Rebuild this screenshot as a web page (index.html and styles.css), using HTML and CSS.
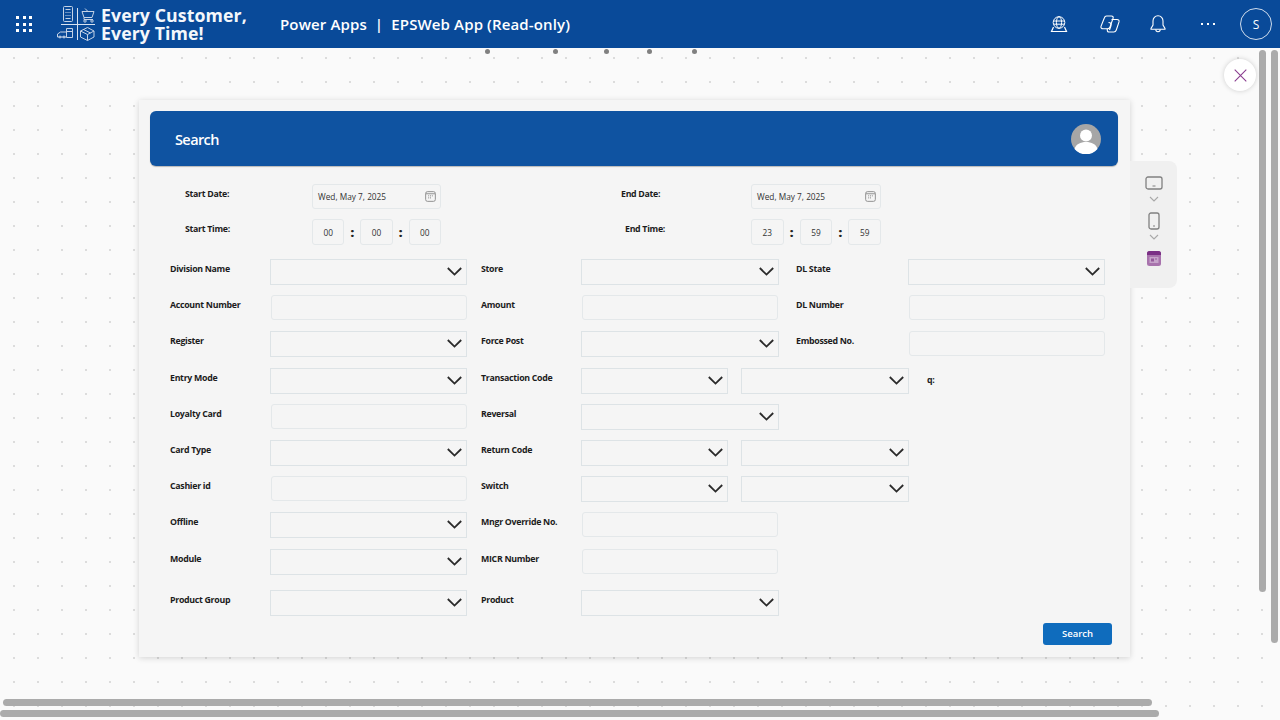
FILE: index.html
```html
<!DOCTYPE html>
<html lang="en">
<head>
<meta charset="utf-8">
<title>EPSWeb App</title>
<link rel="stylesheet" href="styles.css">
</head>
<body>
<svg class="defs" width="0" height="0">
  <symbol id="chev" viewBox="0 0 15 9"><path d="M.8 1 7.500 7.600 14.200 1" fill="none" stroke="#2b2b2b" stroke-width="1.800"/></symbol>
  <symbol id="cal" viewBox="0 0 12 12"><rect x=".7" y=".7" width="10.600" height="10.600" rx="2" fill="none" stroke="#8a8a8a"/><path d="M1 3h10" stroke="#8a8a8a"/><path d="M3.500 5.300h1M5.500 5.300h1M7.500 5.300h1M3.500 7.500h1M5.500 7.500h1" stroke="#777"/></symbol>
</svg>
<header class="topbar">
  <div class="waffle"><i></i><i></i><i></i><i></i><i></i><i></i><i></i><i></i><i></i></div>
  <div class="logo">
    <svg class="logo-art" width="42" height="36" viewBox="0 0 42 36" fill="none" stroke="#c4d2e6" stroke-width="1">
      <rect x="6.500" y=".5" width="9" height="15" rx="1"/><path d="M8.500 3.500h5M8.500 6.500h1M10.500 6.500h1M12.500 6.500h1M8.500 9.500h1M10.500 9.500h1M12.500 9.500h1M8.500 12.500h5"/>
      <path d="M20.500 2v32M4 18.500h34" stroke="#d8e2f0"/>
      <path d="M28 2.500l3 3M25 5.500h12l-2 6H27zM27 11.500v2h9"/><circle cx="28" cy="15" r="1.200"/><circle cx="35" cy="15" r="1.200"/>
      <path d="M.5 31v-3l3-2h6v5zM9.500 22.500h6v9h-6zM9.500 25.500h6"/><circle cx="3" cy="31" r="1"/><circle cx="7" cy="31" r="1"/>
      <path d="M23.500 25l7-3.500 6.500 3.500v6l-6.500 3.500-7-3.500zM23.500 25l7 3.500 6.500-3.500M30.500 28.500v6M26.500 23.500l7 3.500"/>
    </svg>
    <div class="logo-text">Every Customer,<br>Every Time!</div>
  </div>
  <div class="app-title">Power Apps &nbsp;|&nbsp; EPSWeb App (Read-only)</div>
  <div class="top-actions">
    <svg class="ic-globe" width="18" height="18" viewBox="0 0 18 18" fill="none" stroke="#fff" stroke-width="1"><circle cx="9" cy="7.500" r="5.800"/><ellipse cx="9" cy="7.500" rx="2.600" ry="5.800"/><path d="M3.400 6h11.200M3.600 9.200h10.800"/><path d="M3.500 12 1.500 16.500h15L14.500 12" stroke-width="1.200"/></svg>
    <svg class="ic-copilot" width="20" height="18" viewBox="0 0 20 18" fill="none" stroke="#fff" stroke-width="1.100"><path d="M6.500 1h5c1.300 0 2 1 1.600 2.200L10 12c-.4 1.200-1.200 1.800-2.400 1.800H3c-1.500 0-2.400-1-2-2.400L4.300 3C4.700 1.800 5.300 1 6.500 1z"/><path d="M11.500 4.500h5.500c1.500 0 2.400 1 2 2.400L16.300 15c-.4 1.200-1.200 2-2.500 2H9c-1.300 0-2-1-1.600-2.200L7 13.800"/><path d="M8.500 7.500c2.500 0 3 1.500 2.400 3.500L9.500 15"/></svg>
    <svg class="ic-bell" width="16" height="18" viewBox="0 0 16 18" fill="none" stroke="#fff" stroke-width="1.100"><path d="M8 .8c-3 0-5 2.200-5 5.200v4L1 13.500v.8h14v-.8L13 10V6c0-3-2-5.200-5-5.200z"/><path d="M5.800 14.500c0 3 4.400 3 4.400 0"/></svg>
    <div class="more"><i></i><i></i><i></i></div>
    <div class="avatar">S</div>
  </div>
</header>

<main class="canvas">
  <i class="handle h1"></i><i class="handle h2"></i><i class="handle h3"></i><i class="handle h4"></i><i class="handle h5"></i>
  <button class="close" aria-label="Close"><svg width="13" height="13" viewBox="0 0 13 13"><path d="M.7.7l11.600 11.600M12.300.7.7 12.300" stroke="#8a3d8f" stroke-width="1.100" fill="none"/></svg></button>

  <section class="card">
    <div class="card-head">
      <h1>Search</h1>
      <svg class="user" width="30" height="30" viewBox="0 0 30 30"><circle cx="15" cy="15" r="15" fill="#a6a6a6"/><circle cx="15" cy="11.500" r="6" fill="#fff"/><path d="M3.500 25c1.500-5 6-7 11.500-7s10 2 11.500 7a15 15 0 0 1-23 0z" fill="#fff"/></svg>
    </div>

    <div class="dates">
      <div class="date-row">
        <span class="lbl lbl-a">Start Date:</span>
        <div class="box datebox">Wed, May 7, 2025<svg width="11" height="11"><use href="#cal"/></svg></div>
        <span class="lbl lbl-b">End Date:</span>
        <div class="box datebox">Wed, May 7, 2025<svg width="11" height="11"><use href="#cal"/></svg></div>
      </div>
      <div class="date-row time-row">
        <span class="lbl lbl-a">Start Time:</span>
        <div class="times"><span class="box tm">00</span><b>:</b><span class="box tm">00</span><b>:</b><span class="box tm">00</span></div>
        <span class="lbl lbl-b2">End Time:</span>
        <div class="times"><span class="box tm">23</span><b>:</b><span class="box tm">59</span><b>:</b><span class="box tm">59</span></div>
      </div>
    </div>

    <div class="fields">
      <span class="lbl">Division Name</span><div class="dd"><svg><use href="#chev"/></svg></div>
      <span class="lbl">Store</span><div class="dd"><svg><use href="#chev"/></svg></div>
      <span class="lbl">DL State</span><div class="dd"><svg><use href="#chev"/></svg></div>

      <span class="lbl">Account Number</span><div class="box inp"></div>
      <span class="lbl">Amount</span><div class="box inp"></div>
      <span class="lbl">DL Number</span><div class="box inp"></div>

      <span class="lbl">Register</span><div class="dd"><svg><use href="#chev"/></svg></div>
      <span class="lbl">Force Post</span><div class="dd"><svg><use href="#chev"/></svg></div>
      <span class="lbl">Embossed No.</span><div class="box inp"></div>

      <span class="lbl">Entry Mode</span><div class="dd"><svg><use href="#chev"/></svg></div>
      <span class="lbl">Transaction Code</span><div class="split"><div class="dd"><svg><use href="#chev"/></svg></div><div class="dd"><svg><use href="#chev"/></svg></div></div>
      <span class="lbl q">q:</span><span></span>

      <span class="lbl">Loyalty Card</span><div class="box inp"></div>
      <span class="lbl">Reversal</span><div class="dd"><svg><use href="#chev"/></svg></div>
      <span></span><span></span>

      <span class="lbl">Card Type</span><div class="dd"><svg><use href="#chev"/></svg></div>
      <span class="lbl">Return Code</span><div class="split"><div class="dd"><svg><use href="#chev"/></svg></div><div class="dd"><svg><use href="#chev"/></svg></div></div>
      <span></span><span></span>

      <span class="lbl">Cashier id</span><div class="box inp"></div>
      <span class="lbl">Switch</span><div class="split"><div class="dd"><svg><use href="#chev"/></svg></div><div class="dd"><svg><use href="#chev"/></svg></div></div>
      <span></span><span></span>

      <span class="lbl">Offline</span><div class="dd"><svg><use href="#chev"/></svg></div>
      <span class="lbl">Mngr Override No.</span><div class="box inp"></div>
      <span></span><span></span>

      <span class="lbl">Module</span><div class="dd"><svg><use href="#chev"/></svg></div>
      <span class="lbl">MICR Number</span><div class="box inp"></div>
      <span></span><span></span>
    </div>
    <div class="fields last">
      <span class="lbl">Product Group</span><div class="dd"><svg><use href="#chev"/></svg></div>
      <span class="lbl">Product</span><div class="dd"><svg><use href="#chev"/></svg></div>
      <span></span><span></span>
    </div>
    <div class="actions"><button class="search-btn">Search</button></div>
  </section>

  <aside class="side">
    <svg class="s-mon" width="18" height="14" viewBox="0 0 18 14" fill="none"><rect x="1" y="1" width="16" height="12" rx="2" stroke="#808080" stroke-width="1.300"/><path d="M7.500 10h3" stroke="#808080"/></svg>
    <svg class="s-ch1" width="10" height="6" viewBox="0 0 10 6"><path d="M1 1l4 4 4-4" fill="none" stroke="#a8a8a8" stroke-width="1.100"/></svg>
    <svg class="s-ph" width="12" height="18" viewBox="0 0 12 18" fill="none"><rect x="1" y="1" width="10" height="16" rx="2" stroke="#808080" stroke-width="1.300"/><path d="M5 14h2" stroke="#808080"/></svg>
    <svg class="s-ch2" width="10" height="6" viewBox="0 0 10 6"><path d="M1 1l4 4 4-4" fill="none" stroke="#a8a8a8" stroke-width="1.100"/></svg>
    <svg class="s-app" width="14" height="15" viewBox="0 0 14 15"><rect width="14" height="15" rx="2.500" fill="#a873ad"/><path d="M0 4V2.500A2.500 2.500 0 0 1 2.500 0h9A2.500 2.500 0 0 1 14 2.500V4z" fill="#7a2f85"/><rect x="2.500" y="6" width="9" height="6" fill="#c6a3ca"/><path d="M4 7.500h3v3H4zM8 7.500h2v1H8z" fill="#93599a"/></svg>
  </aside>

  <i class="sb v1"></i><i class="sb v2"></i><i class="sb h-1"></i><i class="sb h-2"></i>
</main>
</body>
</html>
```
FILE: styles.css
```css
* { box-sizing: border-box; }
html, body { margin: 0; height: 100%; overflow: hidden; }
body { font-family: "Open Sans", "Noto Sans", sans-serif; background: #fafafa; color: #222; }
.defs { position: absolute; }

.topbar { height: 48px; background: #094a99; color: #fff; display: flex; align-items: center; }
.waffle { width: 16px; margin-left: 16px; display: grid; grid-template-columns: repeat(3, 3px); gap: 3.500px; }
.waffle i { width: 3px; height: 3px; background: #fff; }
.logo { display: flex; align-items: center; margin-left: 25px; width: 223px; flex: none; }
.logo-art { flex: none; }
.logo-text { margin-left: 2px; font-size: 17.700px; line-height: 18px; font-weight: 700; letter-spacing: .1px; white-space: nowrap; color: #f4f7fb; }
.app-title { font-size: 15px; font-weight: 600; white-space: nowrap; letter-spacing: .13px; }
.top-actions { margin-left: auto; display: flex; align-items: center; padding-right: 8px; }
.ic-copilot { margin-left: 32px; }
.ic-bell { margin-left: 30px; }
.more { display: flex; gap: 4px; margin-left: 35px; }
.more i { width: 2px; height: 2px; background: #fff; }
.avatar { width: 32px; height: 32px; margin-left: 25px; border: 1px solid #cfdcec; border-radius: 50%; display: flex; align-items: center; justify-content: center; font-size: 12px; }

.canvas { position: relative; height: 672px; background-color: #fafafa; background-image: radial-gradient(circle at 1px 1px, #dcdcdc .9px, transparent 1.200px); background-size: 24px 24px; background-position: 13px 9px; }
.handle { position: absolute; top: 1px; width: 5px; height: 5px; border-radius: 50%; background: #808080; }
.h1 { left: 485px; } .h2 { left: 553px; } .h3 { left: 604px; } .h4 { left: 647px; } .h5 { left: 692px; }
.close { position: absolute; left: 1224px; top: 11px; width: 32px; height: 32px; padding: 0; border: 0; border-radius: 50%; background: #fff; box-shadow: 0 0 5px rgba(0,0,0,.18); display: flex; align-items: center; justify-content: center; }

.card { position: absolute; left: 139px; top: 52px; width: 991px; height: 557px; background: #f5f5f5; box-shadow: 0 1px 6px rgba(0,0,0,.16); padding: 11px 12px 0 11px; }
.card-head { height: 55px; background: #0f53a1; border-radius: 6px; display: flex; align-items: center; justify-content: space-between; padding: 0 17px 0 25px; box-shadow: 0 1px 1px rgba(0,0,0,.25); }
.card-head h1 { margin: 2px 0 0; color: #fff; font-size: 14.500px; font-weight: 600; letter-spacing: -.6px; }

.lbl { font-size: 8.800px; font-weight: 700; color: #1c1c1c; white-space: nowrap; line-height: 12px; letter-spacing: -.3px; }
.box { background: #f5f5f5; border: 1px solid #e4e8ea; border-radius: 3px; }

.dates { padding: 18px 0 0 35px; }
.date-row { display: grid; grid-template-columns: 127px 129px 310px 130px; align-items: start; height: 25px; }
.time-row { height: 26px; margin-top: 10px; }
.lbl-a { margin-top: 4px; }
.lbl-b { margin: 4px 0 0 180px; }
.lbl-b2 { margin: 4px 0 0 184px; }
.datebox { height: 25px; display: flex; align-items: center; justify-content: space-between; padding: 0 4px 0 5px; font-size: 8.300px; color: #333; }
.times { display: flex; align-items: center; }
.times b { flex: none; font-size: 13px; font-weight: 800; line-height: 12px; color: #222; width: 16px; text-align: center; }
.tm { flex: 1; height: 26px; display: flex; align-items: center; justify-content: center; font-size: 8.300px; color: #333; }

.fields { margin-top: 14px; padding-left: 20px; display: grid; grid-template-columns: 100px 197px 114px 197px 130px 197px; grid-template-rows: repeat(9, 26px); row-gap: 10.200px; align-items: start; }
.last { margin-top: 15px; grid-template-rows: 26px; }
.fields > .lbl { margin-top: 4px; }
.fields > .lbl:nth-child(6n+3) { padding-left: 14px; }
.fields > .lbl:nth-child(6n+5) { padding-left: 18px; }
.fields > .lbl.q { padding-left: 149px; margin-top: 6px; }
.dd { height: 26px; border: 1px solid #dde3e6; background: #f5f5f5; position: relative; }
.fields > .dd:nth-child(6n+4) { margin-right: -1px; }
.dd svg { position: absolute; right: 4px; top: 7px; width: 15px; height: 9px; }
.inp { height: 25px; margin-left: 1px; }
.split { display: grid; grid-template-columns: 147px 168px; column-gap: 13px; width: 328px; }

.actions { display: flex; justify-content: flex-end; padding: 7px 6px 0 0; }
.search-btn { width: 69px; height: 22px; padding: 0; border: 0; border-radius: 3px; background: #0f6cbd; color: #fff; font: 600 9.500px "Open Sans", sans-serif; }

.side { position: absolute; left: 1130px; top: 113px; width: 47px; height: 127px; background: #f0f0f0; border-radius: 0 8px 8px 0; display: flex; flex-direction: column; align-items: center; padding-top: 15px; }
.s-ch1 { margin-top: 6px; }
.s-ph { margin-top: 10px; }
.s-ch2 { margin-top: 4px; }
.s-app { margin-top: 11px; }

.sb { position: absolute; background: #ababab; border-radius: 4px; }
.v1 { left: 1259px; top: 2px; width: 7px; height: 542px; }
.v2 { left: 1271px; top: 2px; width: 7px; height: 593px; }
.h-1 { left: 3px; top: 651px; width: 1149px; height: 7px; }
.h-2 { left: 0; top: 662px; width: 1159px; height: 7px; }
```
